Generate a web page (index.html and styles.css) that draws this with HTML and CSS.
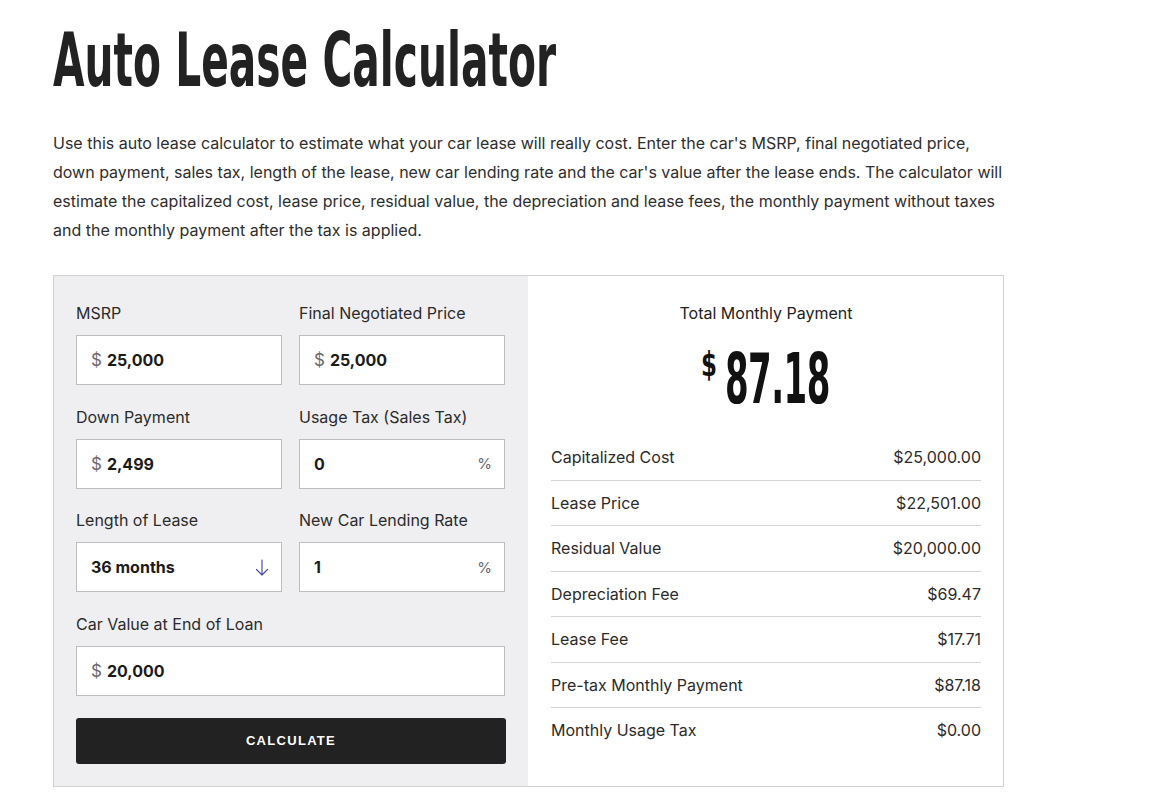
FILE: index.html
```html
<!DOCTYPE html>
<html lang="en">
<head>
<meta charset="utf-8">
<title>Auto Lease Calculator</title>
<link rel="stylesheet" href="styles.css">
</head>
<body>
<main class="page">
  <h1 class="title"><span class="title-text">Auto Lease Calculator</span></h1>
  <p class="intro">Use this auto lease calculator to estimate what your car lease will really cost. Enter the car's MSRP, final negotiated price, down payment, sales tax, length of the lease, new car lending rate and the car's value after the lease ends. The calculator will estimate the capitalized cost, lease price, residual value, the depreciation and lease fees, the monthly payment without taxes and the monthly payment after the tax is applied.</p>

  <section class="calc">
    <form class="inputs">
      <div class="grid">
        <div class="field">
          <label class="label">MSRP</label>
          <div class="box"><span class="pre">$</span><span class="val">25,000</span></div>
        </div>
        <div class="field">
          <label class="label">Final Negotiated Price</label>
          <div class="box"><span class="pre">$</span><span class="val">25,000</span></div>
        </div>
        <div class="field">
          <label class="label">Down Payment</label>
          <div class="box"><span class="pre">$</span><span class="val">2,499</span></div>
        </div>
        <div class="field">
          <label class="label">Usage Tax (Sales Tax)</label>
          <div class="box"><span class="val">0</span><span class="suf">%</span></div>
        </div>
        <div class="field">
          <label class="label">Length of Lease</label>
          <div class="box"><span class="val">36 months</span>
            <svg class="arrow" width="14" height="17" viewBox="0 0 14 17" fill="none" stroke="#4b50a8" stroke-width="1.2" stroke-linecap="round" stroke-linejoin="round"><path d="M7 1v15M1.5 10.5 7 16l5.5-5.5"/></svg>
          </div>
        </div>
        <div class="field">
          <label class="label">New Car Lending Rate</label>
          <div class="box"><span class="val">1</span><span class="suf">%</span></div>
        </div>
        <div class="field wide">
          <label class="label">Car Value at End of Loan</label>
          <div class="box"><span class="pre">$</span><span class="val">20,000</span></div>
        </div>
      </div>
      <button type="button" class="btn">CALCULATE</button>
    </form>

    <div class="results">
      <div class="total-label">Total Monthly Payment</div>
      <div class="total"><span class="cur">$</span><span class="amt">87.18</span></div>
      <ul class="rows">
        <li class="row"><span>Capitalized Cost</span><span>$25,000.00</span></li>
        <li class="row"><span>Lease Price</span><span>$22,501.00</span></li>
        <li class="row"><span>Residual Value</span><span>$20,000.00</span></li>
        <li class="row"><span>Depreciation Fee</span><span>$69.47</span></li>
        <li class="row"><span>Lease Fee</span><span>$17.71</span></li>
        <li class="row"><span>Pre-tax Monthly Payment</span><span>$87.18</span></li>
        <li class="row"><span>Monthly Usage Tax</span><span>$0.00</span></li>
      </ul>
    </div>
  </section>
</main>
</body>
</html>
```

FILE: styles.css
```css
* { box-sizing: border-box; }
html, body { margin: 0; padding: 0; background: #fff; }
body {
  font-family: Inter, "Noto Sans", "Liberation Sans", sans-serif;
  color: #2b2b2b;
  font-size: 16px;
}
.page {
  padding: 23px 0 0 53px;
  width: 1010px;
}
.title {
  margin: 0;
  height: 75px;
  font-family: "DejaVu Sans Condensed", "DejaVu Sans", sans-serif;
  font-weight: 700;
  font-size: 75px;
  line-height: 75px;
  color: #222;
  white-space: nowrap;
}
.title-text {
  display: inline-block;
  transform: scaleX(0.604);
  transform-origin: left center;
}
.intro {
  margin: 31px 0 0;
  width: 955px;
  font-size: 16px;
  line-height: 29px;
  color: #2e2e2e;
  letter-spacing: 0;
}
.calc {
  margin-top: 30px;
  width: 951px;
  border: 1px solid #d3d3d3;
  display: flex;
}
.inputs {
  width: 474px;
  background: #efeff1;
  padding: 25px 23px 22px 22px;
  margin: 0;
}
.grid {
  display: grid;
  grid-template-columns: 206px 206px;
  column-gap: 17px;
  row-gap: 19.5px;
}
.field.wide { grid-column: 1 / 3; }
.label {
  display: block;
  font-size: 16px;
  line-height: 24px;
  margin-bottom: 10px;
  color: #2b2b2b;
}
.box {
  height: 50px;
  background: #fff;
  border: 1px solid #bdbdc0;
  display: flex;
  align-items: center;
  padding: 0 12px 0 14px;
  font-size: 16px;
}
.pre { color: #6b6b6e; margin-right: 5px; font-size: 17px; }
.val { font-weight: 700; color: #1b1b1b; flex: 1; }
.suf { color: #666; font-size: 15px; }
.btn {
  display: block;
  margin-top: 22px;
  width: 430px;
  height: 46px;
  background: #222;
  color: #fff;
  border: 0;
  border-radius: 3px;
  font-family: "Liberation Sans", Arial, sans-serif;
  font-weight: 700;
  font-size: 13px;
  letter-spacing: 1.3px;
  cursor: pointer;
}
.results {
  width: 475px;
  background: #fff;
  padding: 25px 22px 0 23px;
  display: flex;
  flex-direction: column;
}
.total-label {
  text-align: center;
  line-height: 24px;
  font-size: 16px;
  color: #222;
}
.total {
  margin-top: 19px;
  height: 70px;
  display: flex;
  justify-content: center;
  padding-right: 4px;
  font-family: "DejaVu Sans Condensed", "DejaVu Sans", sans-serif;
  font-weight: 700;
  color: #111;
  white-space: nowrap;
}
.cur {
  display: inline-block;
  width: 14px;
  font-size: 34px;
  line-height: 40px;
  transform: scaleX(0.75);
  transform-origin: left center;
  margin-right: 10px;
}
.amt {
  display: inline-block;
  font-size: 70px;
  line-height: 70px;
  width: 102px;
  transform: scaleX(0.54);
  transform-origin: left center;
  letter-spacing: -1px;
}
.rows {
  list-style: none;
  margin: 21px 0 0;
  padding: 0;
}
.row {
  display: flex;
  justify-content: space-between;
  line-height: 22px;
  padding: 11.25px 0;
  border-bottom: 1px solid #d4d4d4;
  font-size: 16px;
  color: #2b2b2b;
}
.row:last-child { border-bottom: 0; }
```
